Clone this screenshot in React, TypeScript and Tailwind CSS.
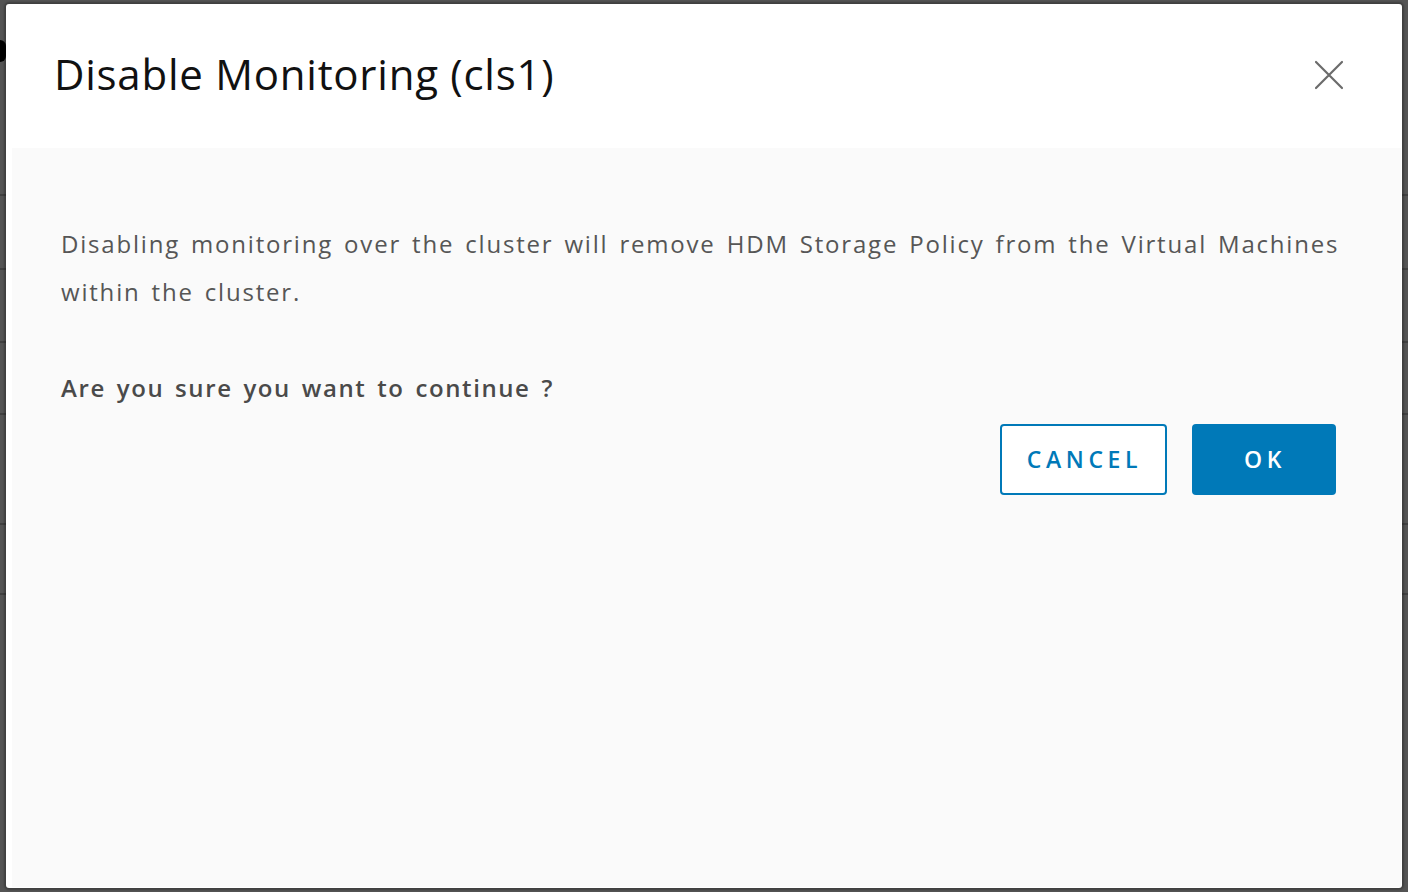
import React from "react";

const rowHeights = [196, 74, 73, 72, 110, 70];

export default function App() {
  return (
    <div className="relative w-[1408px] h-[892px] overflow-hidden bg-[#545454]" style={{ fontFamily: '"Open Sans", "Liberation Sans", sans-serif' }}>
      {/* background page rows behind the overlay */}
      <div className="flex flex-col">
        {rowHeights.map((h, i) => (
          <div key={i} className="border-b-2 border-[#404040]" style={{ height: h }} />
        ))}
      </div>
      <div className="absolute left-[-6px] top-[40px] w-[12px] h-[22px] rounded-full bg-black" />

      {/* modal */}
      <div className="absolute left-[6px] top-[4px] w-[1396px] h-[884px] bg-white rounded-[3px] flex flex-col overflow-hidden shadow-[0_0_2px_2px_rgba(0,0,0,0.25)]">
        <div className="h-[144px] shrink-0 flex items-center justify-between pl-[48px] pr-[56px]">
          <h1 className="text-[42px] text-[#111] font-normal tracking-[0.75px] leading-none pb-[4px]">Disable Monitoring (cls1)</h1>
          <svg width="30" height="30" viewBox="0 0 30 30" className="mr-[2px] mb-[2px]">
            <path d="M2 2 L28 28 M28 2 L2 28" stroke="#6b6b6b" strokeWidth="2.2" strokeLinecap="round" />
          </svg>
        </div>
        <div className="flex-1 ml-[6px] mr-[1px] mb-[1px] bg-[#fafafa] pl-[49px] pr-[56px] pt-[72px]">
          <p className="text-[24px] leading-[48px] text-[#565656] tracking-[1.8px] [word-spacing:3px] whitespace-nowrap">
            Disabling monitoring over the cluster will remove HDM Storage Policy from the Virtual Machines
            <br />
            within the cluster.
          </p>
          <p className="mt-[48px] text-[24px] leading-[48px] font-semibold text-[#4a4a4a] tracking-[1.6px] [word-spacing:3px]">Are you sure you want to continue ?</p>
          <div className="mt-[12px] flex justify-end gap-[25px] pr-[9px]">
            <button className="w-[167px] h-[71px] rounded-[4px] border-2 border-[#0079b8] text-[#0079b8] text-[23px] font-semibold tracking-[4.6px] pl-[2px] bg-white">CANCEL</button>
            <button className="w-[144px] h-[71px] rounded-[4px] bg-[#0079b8] text-white text-[23px] font-semibold tracking-[4.6px] pl-[2px]">OK</button>
          </div>
        </div>
      </div>
    </div>
  );
}
